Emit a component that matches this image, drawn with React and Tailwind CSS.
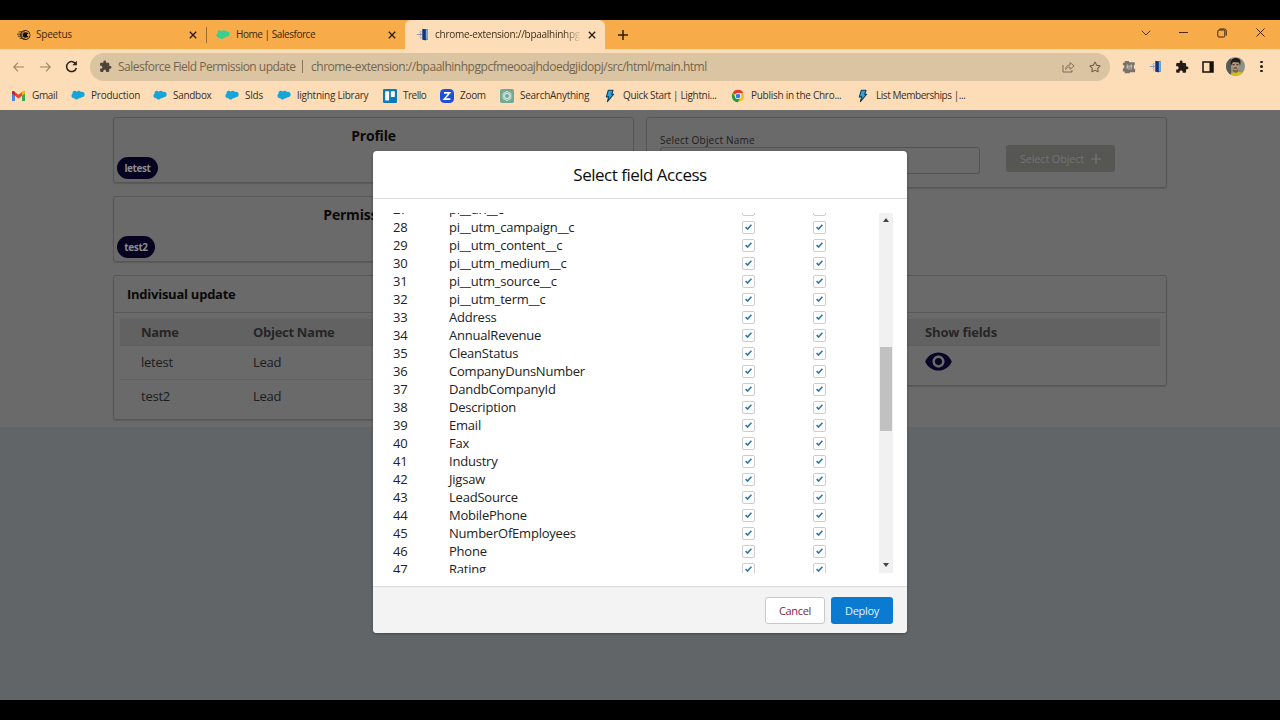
import { useState } from "react"
import { FaRegStar } from "react-icons/fa"
import { MdExtension, MdVisibility } from "react-icons/md"

const Svg = ({ children, className, box = "0 0 16 16" }) => (
  <svg viewBox={box} className={`shrink-0 ${className}`} fill="none">
    {children}
  </svg>
)

// brand icons
const Cloud = ({ className, fill = "#16a5d8" }) => (
  <Svg className={className} box="0 0 16 12">
    <path
      d="M6.6 1.8C7.2 1 8.1.6 9 .7c1 0 1.8.5 2.3 1.300c.4-.2.9-.3 1.300-.3 1.800 0 3 1.400 3 3.200s-1.400 3.200-3.100 3.200l-.6-.1c-.4.8-1.200 1.200-2 1.200l-1-.2c-.5 1-1.400 1.700-2.500 1.700S4.300 10 3.900 9l-.6.1C1.700 9.100.500 7.900.500 6.400c0-1 .5-1.800 1.300-2.300C1.300 2.500 2.500.7 4.200.7c1 0 1.900.4 2.400 1.100z"
      fill={fill}
    />
  </Svg>
)

const Speetus = () => (
  <Svg className="w-[14px] h-[14px]">
    <circle cx="9.500" cy="8" r="5.200" stroke="#2b2013" strokeWidth="1.300" />
    <circle cx="10" cy="8" r="3.200" fill="#120c06" />
    <path d="M2 4.500h7M0 7h7M1 9.300h7M3 11.700h6" stroke="#2b2013" strokeWidth="1" />
    <path d="M11.500 7h3v2h-3z" fill="#f8ab49" />
  </Svg>
)

const Door = ({ className }) => (
  <Svg className={className}>
    <path d="M8 1.500h6.500v13H8z" fill="#1b4a96" />
    <path d="M11.500 2.500l3-1v13l-3-1z" fill="#78add6" />
    <path d="M8 .8l4 1.200v13.500L8 14.300z" fill="#123579" />
    <path d="M1 8h6M4.500 5.500 7 8l-2.500 2.500M6 3.500v2M6 11v2" stroke="#7f92ba" strokeWidth="1.100" />
  </Svg>
)

const Gmail = () => (
  <Svg className="w-[13px] h-[10px]" box="0 0 16 12">
    <path d="M0 1.500v10.500h3.600V5z" fill="#4285f4" />
    <path d="M16 1.500v10.500h-3.600V5z" fill="#34a853" />
    <path d="M0 3V1.500C0 0 1.700-.4 2.700.4L8 4.600 13.300.4C14.300-.4 16 0 16 1.500V3L8 9z" fill="#ea4335" />
    <path d="M12.400 1.100 13.300.4C14.300-.4 16 0 16 1.500V3l-3.600 2.700z" fill="#fbbc04" />
    <path d="M0 3V1.500C0 .3 1.200-.2 2.100.1L3.600 1.100v4.600z" fill="#c5221f" />
  </Svg>
)

const Trello = () => (
  <Svg className="w-[14px] h-[14px]">
    <rect width="16" height="16" rx="1.500" fill="#0c79b8" />
    <rect x="2.500" y="2.500" width="4.500" height="10.500" rx=".6" fill="#fff" />
    <rect x="9" y="2.500" width="4.500" height="6.500" rx=".6" fill="#fff" />
  </Svg>
)

const Zoom = () => (
  <Svg className="w-[14px] h-[14px]">
    <rect width="16" height="16" rx="5" fill="#1d50d2" />
    <path d="M4.500 4.500h6.500L5 11.500h6.800" stroke="#fff" strokeWidth="1.900" />
  </Svg>
)

const Gpt = () => (
  <Svg className="w-[14px] h-[14px]">
    <rect width="16" height="16" rx="2" fill="#74aa94" />
    <g stroke="#e8f4ee" strokeWidth=".8">
      <ellipse cx="8" cy="8" rx="2.700" ry="5.300" />
      <ellipse cx="8" cy="8" rx="2.700" ry="5.300" transform="rotate(60 8 8)" />
      <ellipse cx="8" cy="8" rx="2.700" ry="5.300" transform="rotate(120 8 8)" />
    </g>
  </Svg>
)

const Bolt = () => (
  <Svg className="w-[14px] h-[14px]">
    <path
      d="M6 1.500h5.500L9.900 6h2.300L5 14.500 6.500 9H3.800z"
      fill="#2aa5df"
      stroke="#123a50"
      strokeWidth="1.200"
      strokeLinejoin="round"
    />
  </Svg>
)

const Chrome = () => (
  <Svg className="w-[14px] h-[14px]">
    <circle cx="8" cy="8" r="7" fill="#fbc116" />
    <path d="M8 8 1.900 4.500A7 7 0 0 1 14.100 4.500H8z" fill="#e33b2e" />
    <path d="M1.900 4.500A7 7 0 0 0 7.600 15L11 9.700 8 8 5 9.700z" fill="#279847" />
    <circle cx="8" cy="8" r="3.500" fill="#fff" />
    <circle cx="8" cy="8" r="2.700" fill="#3b78e2" />
  </Svg>
)

const Close = ({ className }) => (
  <Svg className={className} box="0 0 8 8">
    <path d="M.8.8l6.400 6.400M7.200.8.8 7.200" stroke="#2a1c0b" strokeWidth="1.300" />
  </Svg>
)

const bookmarks = [
  { name: "Gmail", icon: <Gmail />, width: "w-[59px]", track: "tracking-[-0.35px]" },
  { name: "Production", icon: <Cloud className="w-[14px] h-[11px]" />, width: "w-[82px]", track: "tracking-[-0.23px]" },
  { name: "Sandbox", icon: <Cloud className="w-[14px] h-[11px]" />, width: "w-[72px]", track: "tracking-[-0.3px]" },
  { name: "Slds", icon: <Cloud className="w-[14px] h-[11px]" />, width: "w-[52px]", track: "tracking-[-0.2px]" },
  { name: "lightning Library", icon: <Cloud className="w-[14px] h-[11px]" />, width: "w-[106px]", track: "tracking-[-0.25px]" },
  { name: "Trello", icon: <Trello />, width: "w-[57px]", track: "tracking-[-0.5px]" },
  { name: "Zoom", icon: <Zoom />, width: "w-[60px]", track: "tracking-[-0.3px]" },
  { name: "SearchAnything", icon: <Gpt />, width: "w-[103px]", track: "tracking-[-0.27px]" },
  { name: "Quick Start | Lightni...", icon: <Bolt />, width: "w-[128px]", track: "tracking-[-0.33px]" },
  { name: "Publish in the Chro...", icon: <Chrome />, width: "w-[125px]", track: "tracking-[-0.27px]" },
  { name: "List Memberships |...", icon: <Bolt />, width: "w-[125px]", track: "tracking-[-0.44px]" },
]

const fields = [
  "pi__url__c",
  "pi__utm_campaign__c",
  "pi__utm_content__c",
  "pi__utm_medium__c",
  "pi__utm_source__c",
  "pi__utm_term__c",
  "Address",
  "AnnualRevenue",
  "CleanStatus",
  "CompanyDunsNumber",
  "DandbCompanyId",
  "Description",
  "Email",
  "Fax",
  "Industry",
  "Jigsaw",
  "LeadSource",
  "MobilePhone",
  "NumberOfEmployees",
  "Phone",
  "Rating",
]

const TabStrip = () => (
  <div className="h-[29px] bg-[#f8ab49] flex items-stretch text-[10px] text-[#38270f]">
    <div className="w-[206px] flex items-center pl-[17px] pr-[9px]">
      <Speetus />
      <span className="ml-[5px] flex-1 tracking-[-0.2px]">Speetus</span>
      <Close className="w-2 h-2" />
    </div>
    <div className="w-px h-4 my-auto bg-[#9b6d31]" />
    <div className="w-[198px] flex items-center pl-[9px] pr-[9px]">
      <Cloud className="w-[14px] h-[12px]" fill="#3bcf8d" />
      <span className="ml-[6px] flex-1 tracking-[-0.45px]">Home | Salesforce</span>
      <Close className="w-2 h-2" />
    </div>
    <div className="w-[200px] rounded-t-md bg-[#fcddb8] flex items-center pl-[11px] pr-[9px]">
      <Door className="w-[13px] h-[13px]" />
      <span className="ml-[6px] w-[146px] overflow-hidden whitespace-nowrap tracking-[-0.27px] bg-gradient-to-r from-[#38270f] from-88% to-[#fcddb8] bg-clip-text text-transparent">
        chrome-extension://bpaalhinhpg
      </span>
      <Close className="w-2 h-2 ml-auto" />
    </div>
    <Svg className="w-[10px] h-[10px] ml-[13px] my-auto" box="0 0 10 10">
      <path d="M5 0v10M0 5h10" stroke="#2a1c0b" strokeWidth="1.500" />
    </Svg>
    <div className="ml-auto flex items-center pb-1 pr-[15px]">
      <Svg className="w-[10px] h-[6px] mr-[28px]" box="0 0 10 6">
        <path d="M.8.8 5 5 9.200.8" stroke="#4c3213" />
      </Svg>
      <div className="w-[9px] h-px bg-[#4c2a13] mr-[29px]" />
      <Svg className="w-[10px] h-[10px] mr-[29px]" box="0 0 10 10">
        <rect x=".8" y="2" width="7" height="7" rx="1.200" stroke="#3d230d" />
        <path d="M2.500 1h5c1 0 1.700.6 1.700 1.600v5" stroke="#3d230d" />
      </Svg>
      <Svg className="w-[9px] h-[9px]" box="0 0 9 9">
        <path d="M.5.5l8 8M8.500.5l-8 8" stroke="#3d230d" />
      </Svg>
    </div>
  </div>
)

const Toolbar = () => (
  <div className="h-[35px] flex items-center pl-[13px]">
    <Svg className="w-[11px] h-[10px]" box="0 0 11 10">
      <path d="M11 5H.8M5 .7.8 5 5 9.300" stroke="#9c8365" strokeWidth="1.100" />
    </Svg>
    <Svg className="w-[11px] h-[10px] ml-[16px]" box="0 0 11 10">
      <path d="M0 5h10.200M6 .7 10.200 5 6 9.300" stroke="#9c8365" strokeWidth="1.100" />
    </Svg>
    <Svg className="w-[13px] h-[13px] ml-[14px]" box="0 0 13 13">
      <path d="M11 4.200A5 5 0 1 0 11.400 8" stroke="#2a2118" strokeWidth="1.500" />
      <path d="M11.800.8v4.400H7.400z" fill="#2a2118" />
    </Svg>
    <div className="w-[1020px] h-[28px] ml-[12px] rounded-full bg-[#dbc4a2] flex items-center pl-[9px] pr-[9px] text-[12px] text-[#75644c]">
      <MdExtension size={13} className="shrink-0 text-[#4d4337]" />
      <span className="ml-[6px] w-[178px] tracking-[-0.51px] whitespace-nowrap">Salesforce Field Permission update</span>
      <div className="w-px h-[13px] ml-[6px] mr-[8px] bg-[#897659]" />
      <span className="tracking-[-0.47px] whitespace-nowrap">
        chrome-extension://bpaalhinhpgpcfmeooajhdoedgjidopj/src/html/main.html
      </span>
      <Svg className="w-[13px] h-[12px] ml-auto mr-[14px]" box="0 0 13 12">
        <path d="M1 4v7h9V9" stroke="#7d6b54" />
        <path d="M3.500 8.500C4 5.500 5.500 4 8 4V1.500L12.200 5 8 8.300V6C6 6 4.500 6.800 3.500 8.500z" stroke="#7d6b54" strokeWidth=".9" />
      </Svg>
      <FaRegStar size={12} className="text-[#6d5c46]" />
    </div>
    <div className="ml-[12px] flex items-center text-[#241c14]">
      <Svg className="w-[14px] h-[14px]">
        <path d="M3 1h5v1.500h6.500V6h-1v4H15v4H9v1H3v-2H1V9.500h1.500V6H1V3h2z" fill="#77736c" />
        <path d="M6 5v5M8 6v5M10.500 5v6M5 8h2M9 7h3" stroke="#e9d7bc" strokeWidth=".9" />
      </Svg>
      <Door className="w-[13px] h-[13px] ml-[13px]" />
      <MdExtension size={14} className="ml-[13px]" />
      <Svg className="w-[12px] h-[12px] ml-[13px]" box="0 0 12 12">
        <path d="M1 1h10v10H1z" stroke="#17110b" strokeWidth="1.500" />
        <path d="M7.500 1H11v10H7.500z" fill="#17110b" />
      </Svg>
      <Svg className="w-[19px] h-[19px] ml-[12px] rounded-full" box="0 0 19 19">
        <path d="M0 0h19v19H0z" fill="#8d9089" />
        <path d="M0 0h5v19H0z" fill="#555a54" />
        <path d="M4 19c0-3 3-4 7-4s8 0 8 4z" fill="#d5bd17" />
        <path d="M7 11h5v4l-2.500 1L7 14z" fill="#7d5f4d" />
        <ellipse cx="9.500" cy="8.500" rx="3.500" ry="4.800" fill="#b3937c" />
        <path d="M5 8.500C4 3 6 1 10 1s5.500 3 4 7.500l-1-3-6-.5z" fill="#211c19" />
        <path d="M6.500 7.700h2.200M10.300 7.700h2.200M7.700 11h3.500" stroke="#3d2c22" strokeWidth="1" />
      </Svg>
      <div className="ml-[15px] flex flex-col gap-[2px]">
        <i className="w-[2.500px] h-[2.500px] rounded-full bg-current" />
        <i className="w-[2.500px] h-[2.500px] rounded-full bg-current" />
        <i className="w-[2.500px] h-[2.500px] rounded-full bg-current" />
      </div>
    </div>
  </div>
)

const Bookmarks = () => (
  <div className="h-[23px] flex items-center pl-[12px] text-[10px] text-[#3c2e1d]">
    {bookmarks.map(b => (
      <div key={b.name} className={`shrink-0 flex items-center ${b.width}`}>
        <span className="w-[14px] mr-[6px] shrink-0">{b.icon}</span>
        <span className={`whitespace-nowrap ${b.track}`}>{b.name}</span>
      </div>
    ))}
  </div>
)

const card = "border border-[#565656] rounded-[3px] shadow-[0_1px_1px_#5b5b5b]"

const NameCard = ({ title, badge, className }) => (
  <div className={`${card} h-[66px] flex flex-col`}>
    <h2 className="mt-[7px] text-center text-[14px] leading-[22px] font-bold tracking-[-0.2px] text-[#0a0a0a]">{title}</h2>
    <span
      className={`mt-[10px] ml-[3px] h-[22px] rounded-full bg-[#060320] text-[#8b8a92] text-[10px] leading-[22px] font-bold text-center tracking-[-0.4px] ${className}`}
    >
      {badge}
    </span>
  </div>
)

const Page = () => (
  <div className="h-[317px] bg-[#6a6a6a] pt-[7px] px-[113px] text-[#1c1c1c]">
    <div className="grid grid-cols-[521px_521px] gap-x-[12px]">
      <div className="flex flex-col gap-[13px]">
        <NameCard title="Profile" badge="letest" className="w-[41px]" />
        <NameCard title="Permission Set" badge="test2" className="w-[38px]" />
      </div>
      <div className={`${card} h-[71px] flex pl-[13px]`}>
        <div className="w-[320px] pt-[15px]">
          <label className="block text-[10px] leading-[14px] tracking-[0.2px]">Select Object Name</label>
          <div className="h-[27px] border border-[#525252] rounded-[3px]" />
        </div>
        <button className="ml-[26px] mt-[27px] w-[109px] h-[27px] pt-px rounded-[3px] bg-[#565653] text-[#737373] text-[11px] tracking-[-0.2px] flex items-center justify-center gap-[7px] whitespace-nowrap">
          Select Object
          <Svg className="w-[10px] h-[10px]" box="0 0 10 10">
            <path d="M5 0v10M0 5h10" stroke="#777" strokeWidth="1.200" />
          </Svg>
        </button>
      </div>
      <div className={`${card} mt-[13px] h-[145px]`}>
        <h3 className="h-[37px] leading-[37px] pl-[13px] border-b border-[#595959] text-[13px] font-bold tracking-[-0.25px] text-[#0a0a0a]">
          Indivisual update
        </h3>
        <div className="mt-[6px] mx-[6px] text-[13px]">
          <div className="h-[27px] flex items-center pl-[21px] pt-px bg-[#636262] border-b border-[#5f5f5f] font-bold text-[#262626] tracking-[-0.3px]">
            <span className="w-[112px]">Name</span>
            <span>Object Name</span>
          </div>
          <div className="h-[34px] flex items-center pl-[21px] border-b border-[#616161] tracking-[-0.25px]">
            <span className="w-[112px]">letest</span>
            <span>Lead</span>
          </div>
          <div className="h-[34px] flex items-center pl-[21px] tracking-[-0.25px]">
            <span className="w-[112px]">test2</span>
            <span>Lead</span>
          </div>
        </div>
      </div>
      <div className={`${card} mt-[13px] h-[111px]`}>
        <div className="h-[37px] border-b border-[#595959]" />
        <div className="mt-[6px] mx-[6px] text-[13px]">
          <div className="h-[27px] flex items-center pl-[272px] pt-px bg-[#636262] border-b border-[#5f5f5f] font-bold text-[#262626] tracking-[-0.15px]">
            Show fields
          </div>
          <div className="h-[31px] flex items-center pl-[271px]">
            <MdVisibility size={29} className="text-[#090526]" />
          </div>
        </div>
      </div>
    </div>
  </div>
)

const Checkbox = ({ checked, onClick }) => (
  <button
    onClick={onClick}
    className="w-[13px] h-[13px] rounded-[2px] border border-[#c9cdd4] bg-white flex items-center justify-center"
  >
    {checked && (
      <Svg className="w-[7px] h-[6px]" box="0 0 7 6">
        <path d="M.6 3.100 2.600 5 6.400.8" stroke="#2a78a8" strokeWidth="1.600" />
      </Svg>
    )}
  </button>
)

const Modal = () => {
  const [off, setOff] = useState({})
  const toggle = key => setOff(prev => ({ ...prev, [key]: !prev[key] }))

  return (
    <div className="absolute left-[373px] top-[151px] w-[534px] h-[482px] rounded-[4px] bg-white overflow-hidden shadow-[0_1px_3px_rgba(0,0,0,0.3)] flex flex-col">
      <h1 className="h-[48px] shrink-0 border-b border-[#dedede] text-center text-[17px] leading-[48px] tracking-[-0.5px] text-[#0d0d0d]">
        Select field Access
      </h1>
      <div className="h-[360px] mt-[14px] ml-[20px] mr-[14px] flex">
        <div className="flex-1 overflow-hidden text-[13px] text-[#222]">
          <div className="-mt-[13px]">
            {fields.map((name, i) => (
              <div key={name} className="h-[18px] flex items-center tracking-[-0.22px]">
                <span className="w-[56px] leading-[18px]">{27 + i}</span>
                <span className="w-[293px] leading-[18px]">{name}</span>
                <span className="w-[71px]">
                  <Checkbox checked={!off[`r${i}`]} onClick={() => toggle(`r${i}`)} />
                </span>
                <Checkbox checked={!off[`e${i}`]} onClick={() => toggle(`e${i}`)} />
              </div>
            ))}
          </div>
        </div>
        <div className="w-[14px] bg-[#f1f1f1] flex flex-col items-center">
          <i className="mt-[5px] border-x-[3.500px] border-x-transparent border-b-[4px] border-b-[#454545]" />
          <div className="mt-[125px] w-[12px] h-[84px] bg-[#c1c1c1]" />
          <i className="mt-auto mb-[6px] border-x-[3.500px] border-x-transparent border-t-[4px] border-t-[#454545]" />
        </div>
      </div>
      <div className="mt-auto h-[47px] bg-[#f3f3f3] border-t border-[#dcdcdc] flex items-center justify-end gap-[6px] pr-[14px] text-[11px] tracking-[-0.3px]">
        <button className="w-[60px] h-[27px] pt-[2px] rounded-[3px] border border-[#c9c9c9] bg-white text-[#7d1f48]">Cancel</button>
        <button className="w-[62px] h-[27px] pt-[2px] rounded-[3px] bg-[#0b7bd1] text-[#e4f2fc]">Deploy</button>
      </div>
    </div>
  )
}

const App = () => (
  <div className="relative w-[1280px] h-[720px] overflow-hidden bg-black py-[20px] font-['Open_Sans','Noto_Sans',sans-serif]">
    <div className="h-[680px] bg-[#616568]">
      <div className="h-[90px] bg-[#fcddb8]">
        <TabStrip />
        <Toolbar />
        <Bookmarks />
      </div>
      <Page />
    </div>
    <Modal />
  </div>
)

export default App
